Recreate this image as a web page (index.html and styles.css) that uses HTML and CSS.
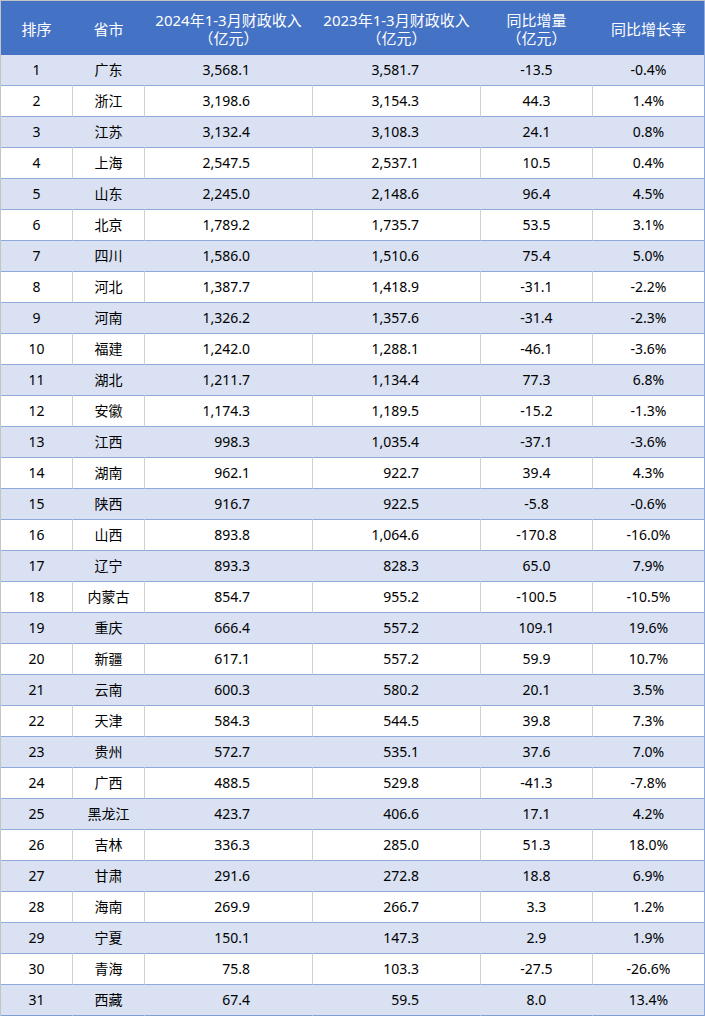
FILE: index.html
```html
<!DOCTYPE html>
<html lang="zh-CN">
<head>
<meta charset="utf-8">
<title>2024年1-3月各省财政收入</title>
<link rel="stylesheet" href="styles.css">
</head>
<body>
<table class="tbl">
  <colgroup>
    <col class="c-rank">
    <col class="c-prov">
    <col class="c-num">
    <col class="c-num">
    <col class="c-delta">
    <col class="c-rate">
  </colgroup>
  <thead>
    <tr>
      <th>排序</th>
      <th>省市</th>
      <th>2024年1-3月财政收入<br>（亿元）</th>
      <th>2023年1-3月财政收入<br>（亿元）</th>
      <th>同比增量<br>（亿元）</th>
      <th>同比增长率</th>
    </tr>
  </thead>
  <tbody>
    <tr><td>1</td><td>广东</td><td class="n24">3,568.1</td><td class="n23">3,581.7</td><td>-13.5</td><td>-0.4%</td></tr>
    <tr><td>2</td><td>浙江</td><td class="n24">3,198.6</td><td class="n23">3,154.3</td><td>44.3</td><td>1.4%</td></tr>
    <tr><td>3</td><td>江苏</td><td class="n24">3,132.4</td><td class="n23">3,108.3</td><td>24.1</td><td>0.8%</td></tr>
    <tr><td>4</td><td>上海</td><td class="n24">2,547.5</td><td class="n23">2,537.1</td><td>10.5</td><td>0.4%</td></tr>
    <tr><td>5</td><td>山东</td><td class="n24">2,245.0</td><td class="n23">2,148.6</td><td>96.4</td><td>4.5%</td></tr>
    <tr><td>6</td><td>北京</td><td class="n24">1,789.2</td><td class="n23">1,735.7</td><td>53.5</td><td>3.1%</td></tr>
    <tr><td>7</td><td>四川</td><td class="n24">1,586.0</td><td class="n23">1,510.6</td><td>75.4</td><td>5.0%</td></tr>
    <tr><td>8</td><td>河北</td><td class="n24">1,387.7</td><td class="n23">1,418.9</td><td>-31.1</td><td>-2.2%</td></tr>
    <tr><td>9</td><td>河南</td><td class="n24">1,326.2</td><td class="n23">1,357.6</td><td>-31.4</td><td>-2.3%</td></tr>
    <tr><td>10</td><td>福建</td><td class="n24">1,242.0</td><td class="n23">1,288.1</td><td>-46.1</td><td>-3.6%</td></tr>
    <tr><td>11</td><td>湖北</td><td class="n24">1,211.7</td><td class="n23">1,134.4</td><td>77.3</td><td>6.8%</td></tr>
    <tr><td>12</td><td>安徽</td><td class="n24">1,174.3</td><td class="n23">1,189.5</td><td>-15.2</td><td>-1.3%</td></tr>
    <tr><td>13</td><td>江西</td><td class="n24">998.3</td><td class="n23">1,035.4</td><td>-37.1</td><td>-3.6%</td></tr>
    <tr><td>14</td><td>湖南</td><td class="n24">962.1</td><td class="n23">922.7</td><td>39.4</td><td>4.3%</td></tr>
    <tr><td>15</td><td>陕西</td><td class="n24">916.7</td><td class="n23">922.5</td><td>-5.8</td><td>-0.6%</td></tr>
    <tr><td>16</td><td>山西</td><td class="n24">893.8</td><td class="n23">1,064.6</td><td>-170.8</td><td>-16.0%</td></tr>
    <tr><td>17</td><td>辽宁</td><td class="n24">893.3</td><td class="n23">828.3</td><td>65.0</td><td>7.9%</td></tr>
    <tr><td>18</td><td>内蒙古</td><td class="n24">854.7</td><td class="n23">955.2</td><td>-100.5</td><td>-10.5%</td></tr>
    <tr><td>19</td><td>重庆</td><td class="n24">666.4</td><td class="n23">557.2</td><td>109.1</td><td>19.6%</td></tr>
    <tr><td>20</td><td>新疆</td><td class="n24">617.1</td><td class="n23">557.2</td><td>59.9</td><td>10.7%</td></tr>
    <tr><td>21</td><td>云南</td><td class="n24">600.3</td><td class="n23">580.2</td><td>20.1</td><td>3.5%</td></tr>
    <tr><td>22</td><td>天津</td><td class="n24">584.3</td><td class="n23">544.5</td><td>39.8</td><td>7.3%</td></tr>
    <tr><td>23</td><td>贵州</td><td class="n24">572.7</td><td class="n23">535.1</td><td>37.6</td><td>7.0%</td></tr>
    <tr><td>24</td><td>广西</td><td class="n24">488.5</td><td class="n23">529.8</td><td>-41.3</td><td>-7.8%</td></tr>
    <tr><td>25</td><td>黑龙江</td><td class="n24">423.7</td><td class="n23">406.6</td><td>17.1</td><td>4.2%</td></tr>
    <tr><td>26</td><td>吉林</td><td class="n24">336.3</td><td class="n23">285.0</td><td>51.3</td><td>18.0%</td></tr>
    <tr><td>27</td><td>甘肃</td><td class="n24">291.6</td><td class="n23">272.8</td><td>18.8</td><td>6.9%</td></tr>
    <tr><td>28</td><td>海南</td><td class="n24">269.9</td><td class="n23">266.7</td><td>3.3</td><td>1.2%</td></tr>
    <tr><td>29</td><td>宁夏</td><td class="n24">150.1</td><td class="n23">147.3</td><td>2.9</td><td>1.9%</td></tr>
    <tr><td>30</td><td>青海</td><td class="n24">75.8</td><td class="n23">103.3</td><td>-27.5</td><td>-26.6%</td></tr>
    <tr><td>31</td><td>西藏</td><td class="n24">67.4</td><td class="n23">59.5</td><td>8.0</td><td>13.4%</td></tr>
  </tbody>
</table>
</body>
</html>
```

FILE: styles.css
```css
html, body {
  margin: 0;
  padding: 0;
  background: #ffffff;
}

.tbl {
  width: 705px;
  table-layout: fixed;
  border-collapse: separate;
  border-spacing: 0;
  border-top: 1px solid #c4c4c4;
  border-left: 1px solid #c4c4c4;
  font-family: "Noto Sans", "Noto Sans CJK SC", sans-serif;
  color: #000;
}

.c-rank, .c-prov { width: 72px; }
.c-num { width: 168px; }
.c-delta, .c-rate { width: 112px; }

.tbl th {
  height: 54px;
  padding: 1px 0 0 0;
  box-sizing: border-box;
  background: #4472c4;
  color: #ffffff;
  font-size: 15px;
  font-weight: normal;
  line-height: 18px;
  text-align: center;
  vertical-align: middle;
  border-right: 1px solid #4472c4;
}

.tbl td {
  height: 31px;
  padding: 0;
  box-sizing: border-box;
  font-size: 14px;
  line-height: 18px;
  text-align: center;
  vertical-align: middle;
  border-bottom: 1px solid #8eaadb;
  border-right: 1px solid #d0d0d0;
  background: #ffffff;
  white-space: nowrap;
}

.tbl tbody tr:nth-child(odd) td {
  background: #d9e1f2;
  border-right-color: #d9e1f2;
}

.tbl th:last-child,
.tbl tbody tr td:last-child {
  border-right-color: #8eaadb;
}

.tbl td.n24 {
  text-align: right;
  padding-right: 62px;
}

.tbl td.n23 {
  text-align: right;
  padding-right: 61px;
}

.tbl tbody tr:last-child td {
  border-bottom-color: #7f9fd6;
}
```
